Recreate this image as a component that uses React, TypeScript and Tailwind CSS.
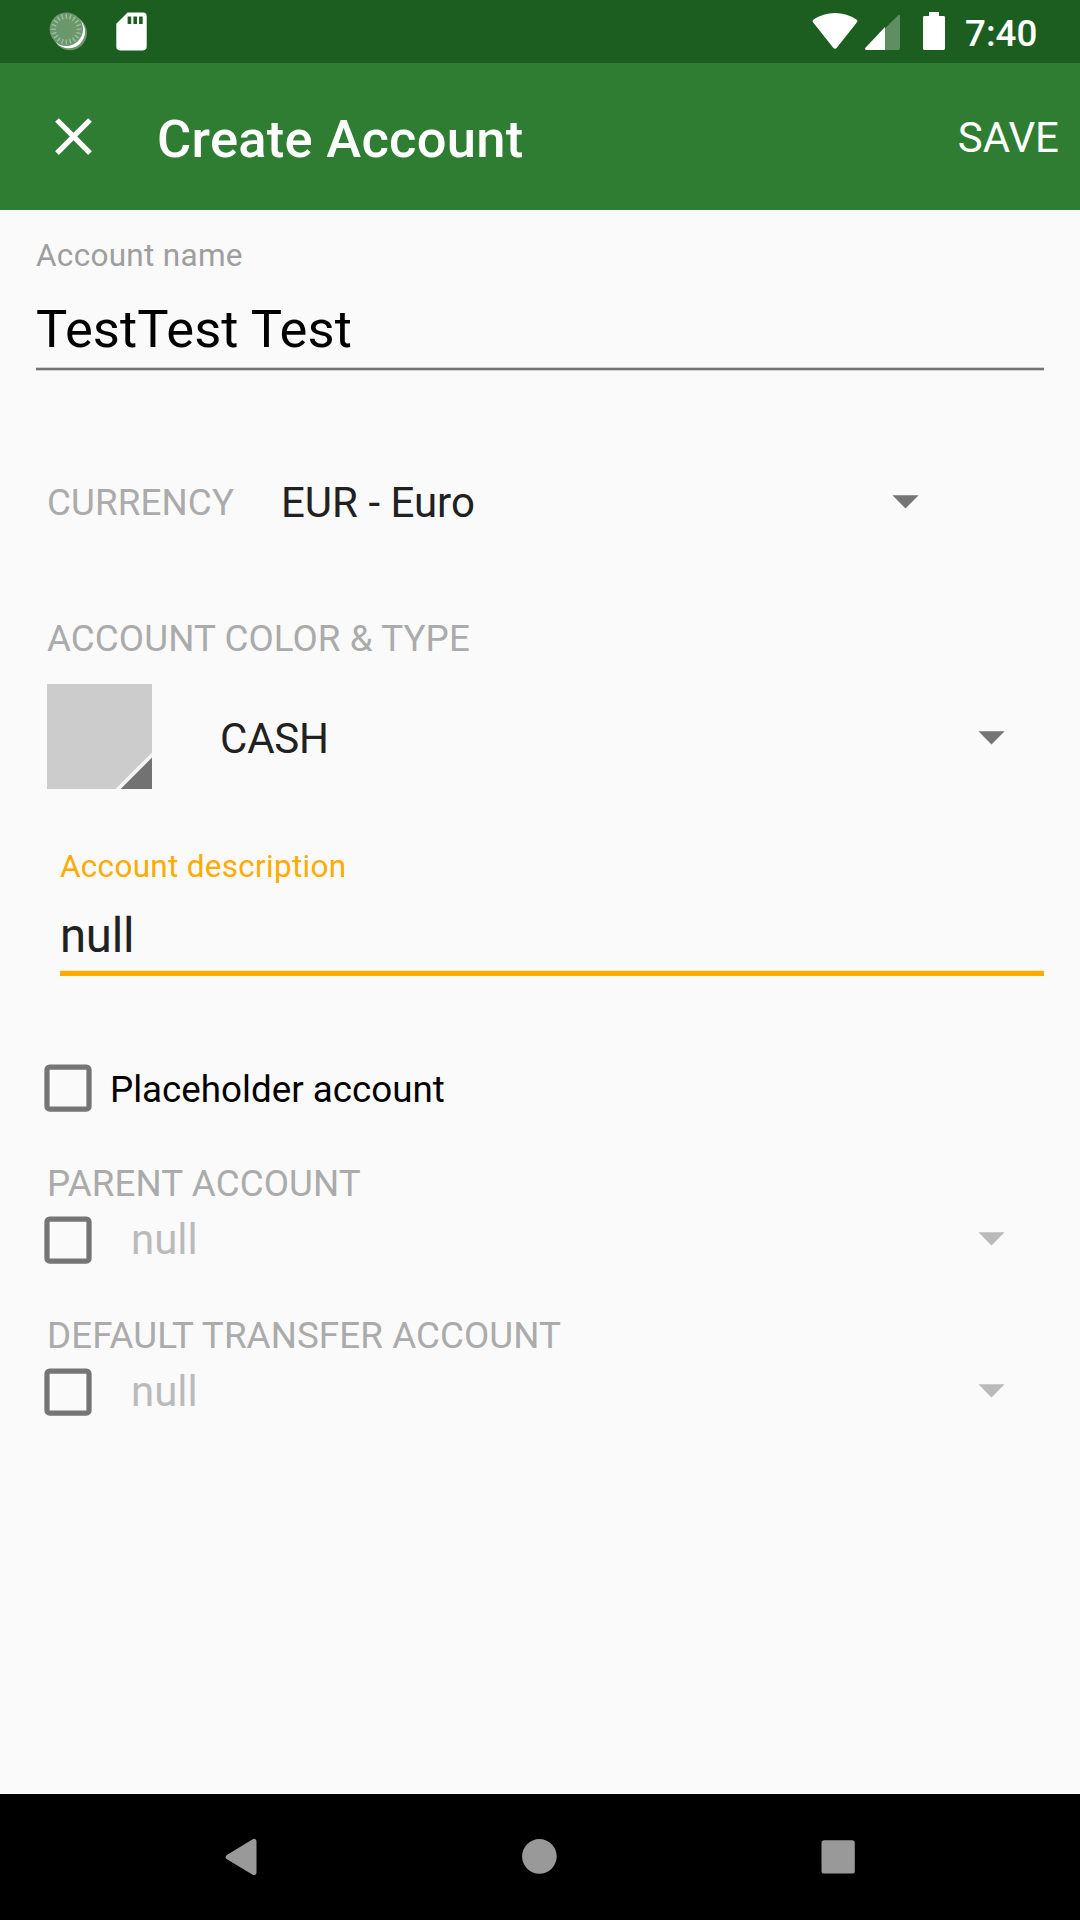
import React from "react";

const TICKS = Array.from({ length: 20 }, (_, i) => i * 18);

function SyncIcon() {
  return (
    <svg className="ml-[49px] size-[39px]" viewBox="0 0 39 39">
      <circle cx="20.8" cy="21" r="17.2" fill="#fff" fillOpacity="0.35" />
      <circle cx="19.6" cy="19.8" r="16.4" fill="#fff" />
      <circle cx="17.3" cy="17.2" r="16.7" fill="#6a986c" />
      {TICKS.map((a) => (
        <path key={a} d="M17.3 1.8V6.8" stroke="#a0bfa1" strokeWidth="1.3" transform={`rotate(${a} 17.3 17.2)`} />
      ))}
    </svg>
  );
}

function Caret({ className }: { className: string }) {
  return (
    <svg className={`h-[14px] w-[27px] shrink-0 ${className}`} viewBox="0 0 27 14">
      <path d="M0.4 0.3H26.6L13.5 13.4Z" fill="currentColor" />
    </svg>
  );
}

function Checkbox() {
  return (
    <svg className="size-[48px] shrink-0" viewBox="0 0 48 48">
      <rect x="3" y="3" width="42" height="42" rx="2.6" fill="none" stroke="#757575" strokeWidth="5.25" />
    </svg>
  );
}

function SectionLabel({ children }: { children: React.ReactNode }) {
  return (
    <div className="h-[44px] pl-[47px] text-[36.75px] leading-[44px] tracking-[0.08px] text-[#ababab]">{children}</div>
  );
}

function AccountPicker({ label }: { label: string }) {
  return (
    <section className="h-[152px]">
      <SectionLabel>{label}</SectionLabel>
      <div className="mt-[10px] flex h-[48px] items-start pl-[44px] text-[#bababa]">
        <Checkbox />
        <span className="ml-[39px] flex-1 text-[42px] leading-[48px]">null</span>
        <Caret className="mt-[16px] mr-[75px]" />
      </div>
    </section>
  );
}

export default function App() {
  return (
    <div className="flex h-[1920px] w-[1080px] flex-col overflow-hidden bg-[#fafafa] font-['Roboto',sans-serif] text-[#212121]">
      <div className="flex h-[63px] shrink-0 items-start bg-[#1b5e20] pt-[12px] text-white">
        <SyncIcon />
        <svg className="ml-[28px] h-[39px] w-[31px]" viewBox="0 0 31 39">
          <path
            fillRule="evenodd"
            d="M11.6 0.4H27Q30.7 0.4 30.7 4.2V34.6Q30.7 38.4 27 38.4H4Q0.3 38.4 0.3 34.6V11.8ZM11.6 4.5V12H15.2V4.5ZM17.4 4.5V12H21V4.5ZM23.1 4.5V12H26.7V4.5Z"
            fill="#fff"
          />
        </svg>
        <svg className="ml-[665px] h-[39px] w-[46px]" viewBox="0 0 46 39">
          <path d="M1.2 10.4Q-0.2 8.8 1.6 7.6Q11 1 23 1Q35 1 44.4 7.6Q46.2 8.8 44.8 10.4L25 35.6Q23 38 21 35.6Z" fill="#fff" />
        </svg>
        <svg className="ml-[7px] h-[39px] w-[36px]" viewBox="0 0 36 39">
          <path d="M33.2 3.3Q35 2 35 4.4V36.2Q35 38 33.2 38H1.6Q-0.8 38 0.5 35.8Z" fill="#fff" fillOpacity="0.3" />
          <path d="M20 15V38H1.6Q-0.8 38 0.5 35.8Z" fill="#fff" />
        </svg>
        <svg className="ml-[22px] h-[39px] w-[23px]" viewBox="0 0 23 39">
          <path d="M6 0H16V4H20.6Q22 4 22 5.4V36.6Q22 38 20.6 38H1.4Q0 38 0 36.6V5.4Q0 4 1.4 4H6Z" fill="#fff" />
        </svg>
        <span className="ml-[19px] text-[36.75px] leading-[43px] font-medium">7:40</span>
      </div>

      <header className="flex h-[147px] shrink-0 items-center bg-[#2e7d32] pl-[42px] text-white">
        <svg className="size-[63px]" viewBox="0 0 24 24">
          <path d="M19 6.41L17.59 5L12 10.59L6.41 5L5 6.41L10.59 12L5 17.59L6.41 19L12 13.41L17.59 19L19 17.59L13.41 12Z" fill="#fff" />
        </svg>
        <h1 className="ml-[52px] flex-1 pt-[4px] text-[52.5px] leading-[62px] font-medium tracking-[0.27px]">Create Account</h1>
        <button className="mr-[21px] pt-[2px] text-[42px] leading-[50px]">SAVE</button>
      </header>

      <main className="flex-1">
        <section className="mr-[36px] ml-[36px] pt-[27px]">
          <div className="h-[38px] text-[31.5px] leading-[38px] tracking-[0.3px] text-[#9e9e9e]">Account name</div>
          <div className="mt-[16px] h-[76px] text-[52.5px] leading-[77px] tracking-[0.1px] text-black">TestTest Test</div>
          <div className="h-[4px] border-y border-[#cfcfcf] bg-[#757575]" />
        </section>

        <section className="mt-[107px] flex h-[50px] items-start pl-[47px]">
          <span className="w-[234px] text-[36.75px] leading-[50px] tracking-[0.12px] text-[#ababab]">CURRENCY</span>
          <span className="flex-1 text-[42px] leading-[50px]">EUR - Euro</span>
          <Caret className="mt-[17px] mr-[161px] text-[#757575]" />
        </section>

        <section className="mt-[89px]">
          <SectionLabel>ACCOUNT COLOR &amp; TYPE</SectionLabel>
          <div className="mt-[23px] flex h-[105px] items-start pl-[47px]">
            <svg className="size-[105px] bg-[#cccccc]" viewBox="0 0 105 105">
              <path d="M105 68.4V105H68.4Z" fill="#f5f5f5" />
              <path d="M105 73.6V105H73.6Z" fill="#727272" />
            </svg>
            <span className="ml-[68px] flex-1 text-[42px] leading-[109px] tracking-[-0.2px]">CASH</span>
            <Caret className="mt-[47px] mr-[75px] text-[#757575]" />
          </div>
        </section>

        <section className="mr-[36px] ml-[60px] pt-[59px]">
          <div className="h-[38px] text-[31.5px] leading-[38px] tracking-[0.29px] text-[#ffab00]">Account description</div>
          <div className="mt-[16px] h-[68px] text-[47.25px] leading-[69px] tracking-[-0.25px]">null</div>
          <div className="h-[6px] border-t border-[#fdebc8] bg-[#ffab00]" />
        </section>

        <section className="mt-[88px] flex h-[48px] pl-[44px]">
          <Checkbox />
          <span className="ml-[18px] text-[36.75px] leading-[51px] text-black">Placeholder account</span>
        </section>

        <div className="mt-[50px]">
          <AccountPicker label="PARENT ACCOUNT" />
          <AccountPicker label="DEFAULT TRANSFER ACCOUNT" />
        </div>
      </main>

      <nav className="flex h-[126px] shrink-0 items-start bg-black pt-[44px] text-[#999999]">
        <svg className="ml-[225px] h-[38px] w-[32px]" viewBox="0 0 32 38">
          <path d="M29 3.5V34.5L3.2 19.2Z" fill="currentColor" stroke="currentColor" strokeWidth="5" strokeLinejoin="round" />
        </svg>
        <svg className="ml-[265px] size-[36px]" viewBox="0 0 36 36">
          <circle cx="17.4" cy="18.4" r="17.3" fill="currentColor" />
        </svg>
        <svg className="ml-[263px] size-[36px]" viewBox="0 0 36 36">
          <rect x="0.5" y="2.3" width="33.3" height="33.3" rx="2.7" fill="currentColor" />
        </svg>
      </nav>
    </div>
  );
}
